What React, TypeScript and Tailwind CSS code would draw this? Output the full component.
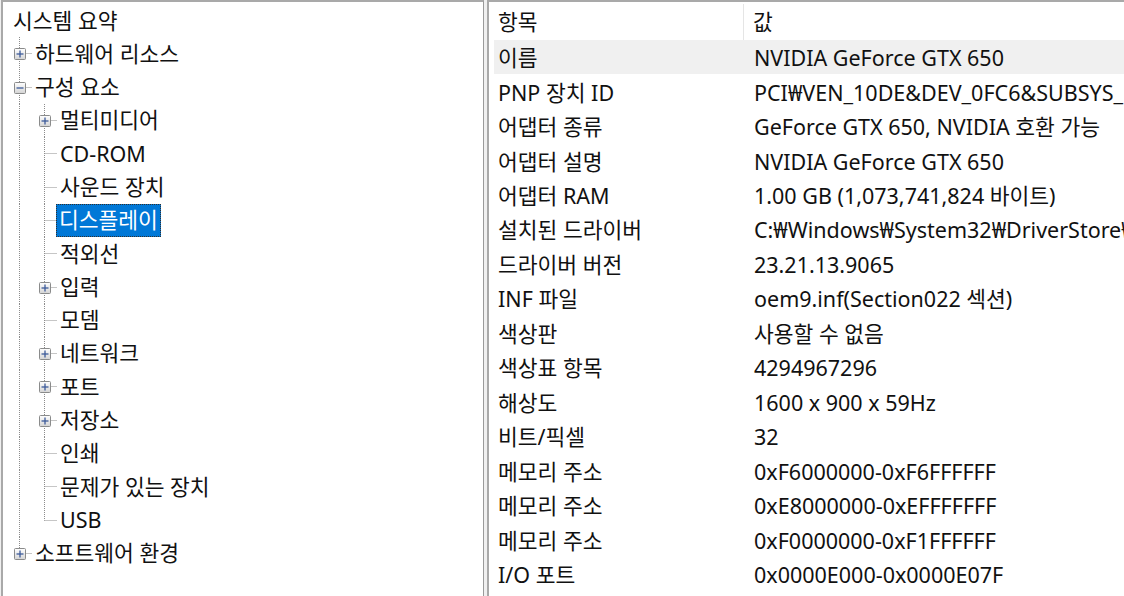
import React from "react";

type CellKind = "pipe" | "tee" | "ell" | "empty";
type Cell = { k: CellKind; box?: "plus" | "minus" };
type TreeRow = { label: string; root?: boolean; cells?: Cell[]; selected?: boolean };

const P: Cell = { k: "pipe" };
const T: Cell = { k: "tee" };

const tree: TreeRow[] = [
  { label: "시스템 요약", root: true },
  { label: "하드웨어 리소스", cells: [{ k: "tee", box: "plus" }] },
  { label: "구성 요소", cells: [{ k: "tee", box: "minus" }] },
  { label: "멀티미디어", cells: [P, { k: "tee", box: "plus" }] },
  { label: "CD-ROM", cells: [P, T] },
  { label: "사운드 장치", cells: [P, T] },
  { label: "디스플레이", cells: [P, T], selected: true },
  { label: "적외선", cells: [P, T] },
  { label: "입력", cells: [P, { k: "tee", box: "plus" }] },
  { label: "모뎀", cells: [P, T] },
  { label: "네트워크", cells: [P, { k: "tee", box: "plus" }] },
  { label: "포트", cells: [P, { k: "tee", box: "plus" }] },
  { label: "저장소", cells: [P, { k: "tee", box: "plus" }] },
  { label: "인쇄", cells: [P, T] },
  { label: "문제가 있는 장치", cells: [P, T] },
  { label: "USB", cells: [P, { k: "ell" }] },
  { label: "소프트웨어 환경", cells: [{ k: "ell", box: "plus" }] },
];

const data: [string, string][] = [
  ["이름", "NVIDIA GeForce GTX 650"],
  ["PNP 장치 ID", "PCI₩VEN_10DE&DEV_0FC6&SUBSYS_"],
  ["어댑터 종류", "GeForce GTX 650, NVIDIA 호환 가능"],
  ["어댑터 설명", "NVIDIA GeForce GTX 650"],
  ["어댑터 RAM", "1.00 GB (1,073,741,824 바이트)"],
  ["설치된 드라이버", "C:₩Windows₩System32₩DriverStore₩"],
  ["드라이버 버전", "23.21.13.9065"],
  ["INF 파일", "oem9.inf(Section022 섹션)"],
  ["색상판", "사용할 수 없음"],
  ["색상표 항목", "4294967296"],
  ["해상도", "1600 x 900 x 59Hz"],
  ["비트/픽셀", "32"],
  ["메모리 주소", "0xF6000000-0xF6FFFFFF"],
  ["메모리 주소", "0xE8000000-0xEFFFFFFF"],
  ["메모리 주소", "0xF0000000-0xF1FFFFFF"],
  ["I/O 포트", "0x0000E000-0x0000E07F"],
];

const LINE = "#8c8c8c";

function TreeCell({ cell }: { cell: Cell }) {
  const w = 25;
  const h = 33;
  const cx = 12.5;
  const cy = 16.5;
  return (
    <svg width={w} height={h} className="shrink-0 block">
      {(cell.k === "pipe" || cell.k === "tee") && (
        <line x1={cx} y1={0} x2={cx} y2={h} stroke={LINE} strokeDasharray="1 1" />
      )}
      {cell.k === "ell" && (
        <line x1={cx} y1={0} x2={cx} y2={cy} stroke={LINE} strokeDasharray="1 1" />
      )}
      {(cell.k === "tee" || cell.k === "ell") && (
        <line x1={cx} y1={cy} x2={w} y2={cy} stroke={LINE} strokeDasharray="1 1" />
      )}
      {cell.box && (
        <g>
          <defs>
            <linearGradient id="bx" x1="0" y1="0" x2="0" y2="1">
              <stop offset="0" stopColor="#ffffff" />
              <stop offset="1" stopColor="#d4d4d4" />
            </linearGradient>
          </defs>
          <rect x={7.5} y={11.5} width={11} height={11} rx={1} fill="url(#bx)" stroke="#8a8b8b" />
          <line x1={9.5} y1={17} x2={16.5} y2={17} stroke="#3c5a9a" strokeWidth={1.3} />
          {cell.box === "plus" && (
            <line x1={13} y1={13.5} x2={13} y2={20.5} stroke="#3c5a9a" strokeWidth={1.3} />
          )}
        </g>
      )}
    </svg>
  );
}

export default function App() {
  return (
    <div
      className="w-[1124px] h-[596px] overflow-hidden bg-[#f0f0f0] flex text-[21.5px] text-[#111111] whitespace-nowrap"
      style={{ fontFamily: '"Noto Sans", "Noto Sans CJK KR", sans-serif' }}
    >
      {/* Left tree panel */}
      <div className="ml-[1px] w-[483px] h-full shrink-0 bg-white border-l-2 border-t-2 border-r border-[#a9a9a9] border-r-[#9a9a9a] pt-[2px]">
        {tree.map((r, i) => (
          <div key={i} className="h-[33.3px] flex items-center">
            {r.root ? (
              <span className="pl-[10px] leading-none">{r.label}</span>
            ) : (
              <div className="flex items-center pl-[4px] h-full">
                {r.cells!.map((c, j) => (
                  <TreeCell key={j} cell={c} />
                ))}
                {r.selected ? (
                  <span className="ml-[-1px] h-full flex items-center px-[3px] bg-[#0078d7] text-white outline-1 outline-dotted outline-[#303030] -outline-offset-1">
                    {r.label}
                  </span>
                ) : (
                  <span className="pl-[3px]">{r.label}</span>
                )}
              </div>
            )}
          </div>
        ))}
      </div>

      {/* Right list panel */}
      <div className="ml-[3px] flex-1 h-full bg-white border-l-2 border-t-2 border-[#a9a9a9] pl-[5px] overflow-hidden">
        <div className="flex h-[38px] items-center pt-[2px]">
          <div className="w-[250px] h-full flex items-center pl-[4px] border-r border-[#e5e5e5]">항목</div>
          <div className="pl-[9px]">값</div>
        </div>
        {data.map(([k, v], i) => (
          <div key={i} className={`flex h-[34.47px] items-center pt-[2px] ${i === 0 ? "bg-[#f0f0f0]" : ""}`}>
            <div className="w-[250px] pl-[4px] shrink-0">{k}</div>
            <div className="pl-[10px]">{v}</div>
          </div>
        ))}
      </div>
    </div>
  );
}
